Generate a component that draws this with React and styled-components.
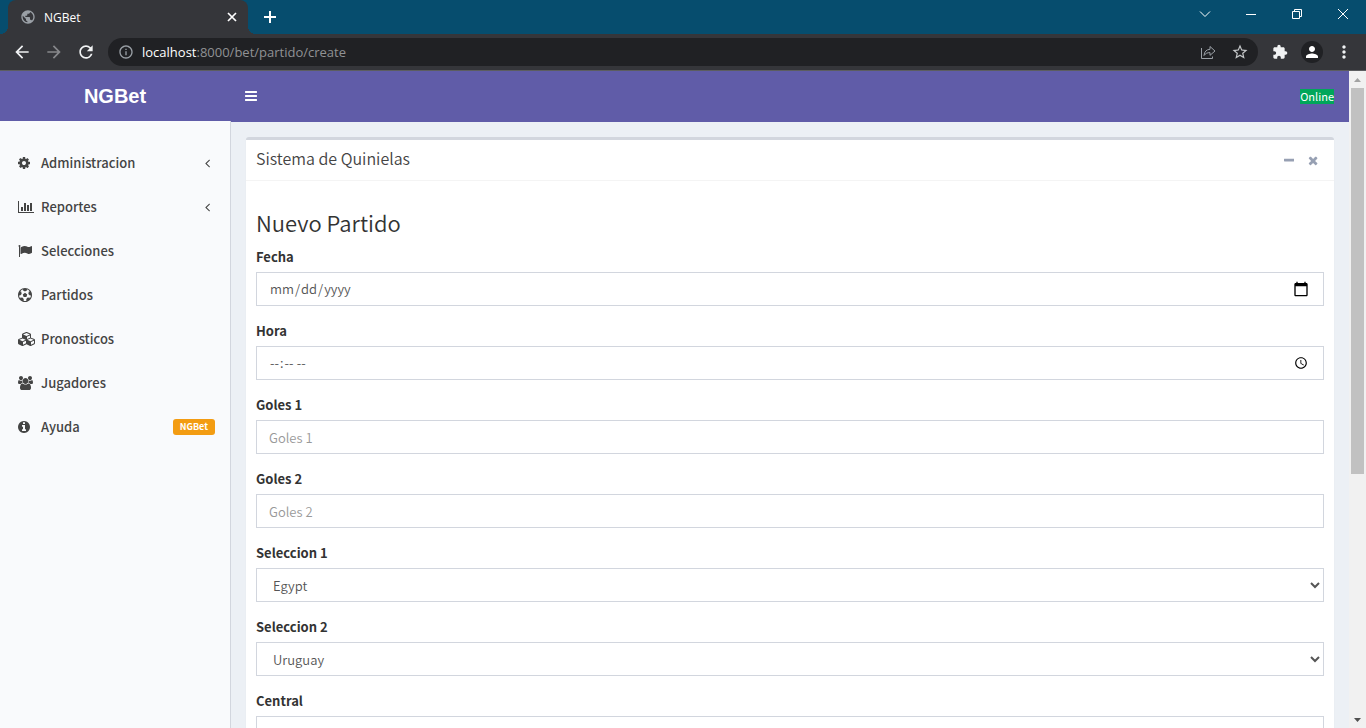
import React from "react";
import styled, { createGlobalStyle, css } from "styled-components";
import {
  MdPublic,
  MdArrowBack,
  MdArrowForward,
  MdRefresh,
  MdInfoOutline,
  MdStarBorder,
  MdExtension,
  MdPerson,
  MdMoreVert,
} from "react-icons/md";

const uiFont = `"Open Sans", "Noto Sans", sans-serif`;
const pageFont = `"Noto Sans CJK SC", "Open Sans", sans-serif`;

const GlobalStyle = createGlobalStyle`
  *, *::before, *::after { box-sizing: border-box; }
  body { margin: 0; overflow: hidden; }
  button, input, select { font-family: inherit; }
  svg { display: block; flex: none; }
`;

/* ---------- browser window ---------- */

const Window = styled.div`
  display: flex;
  flex-direction: column;
  height: 100vh;
  overflow: hidden;
  font-family: ${uiFont};
`;

const PlainButton = styled.button`
  display: flex;
  align-items: center;
  justify-content: center;
  flex: none;
  padding: 0;
  border: 0;
  background: none;
  color: inherit;
  cursor: pointer;
`;

const TabStrip = styled.div`
  display: flex;
  flex: none;
  height: 34px;
  padding-left: 8px;
  background: #064d6e;
  color: #fff;
`;

const Tab = styled.div`
  position: relative;
  display: flex;
  align-items: center;
  gap: 8px;
  width: 240px;
  padding: 0 8px 0 12px;
  border-radius: 8px 8px 0 0;
  background: #35363a;
  font-size: 12px;

  &::before,
  &::after {
    content: "";
    position: absolute;
    bottom: 0;
    width: 8px;
    height: 8px;
  }
  &::before {
    left: -8px;
    background: radial-gradient(circle at 0 0, transparent 8px, #35363a 8px);
  }
  &::after {
    right: -8px;
    background: radial-gradient(circle at 100% 0, transparent 8px, #35363a 8px);
  }
`;

const TabTitle = styled.span`
  flex: 1;
`;

const TabClose = styled(PlainButton)`
  width: 16px;
  height: 16px;
`;

const NewTab = styled(PlainButton)`
  width: 28px;
  margin-left: 8px;
`;

const WindowButtons = styled.div`
  display: flex;
  margin-left: auto;
`;

const WindowButton = styled(PlainButton)`
  width: 46px;
  height: 28px;
`;

const Toolbar = styled.div`
  display: flex;
  align-items: center;
  flex: none;
  height: 37px;
  padding: 0 6px;
  border-bottom: 1px solid #5c5d60;
  background: #35363a;
  color: #f1f3f4;
`;

const ToolButton = styled(PlainButton)`
  width: 32px;
  height: 28px;
  color: ${(p) => (p.$dim ? "#87888b" : "inherit")};
`;

const AddressBar = styled.div`
  display: flex;
  align-items: center;
  flex: 1;
  height: 28px;
  margin: 0 6px;
  padding: 0 2px 0 10px;
  border-radius: 14px;
  background: #202124;
  color: #9aa0a6;
`;

const Url = styled.span`
  flex: 1;
  margin-left: 8px;
  font-size: 13px;
  color: #909294;
`;

const Host = styled.span`
  color: #fff;
`;

const Avatar = styled(PlainButton)`
  width: 22px;
  height: 22px;
  margin: 0 5px;
  border-radius: 50%;
  background: #202124;
  color: #fff;
`;

const Viewport = styled.div`
  display: flex;
  flex: 1;
  min-height: 0;
`;

const ScrollBar = styled.div`
  display: flex;
  flex-direction: column;
  align-items: center;
  flex: none;
  width: 17px;
  background: #f1f1f1;
`;

const ScrollArrow = styled(PlainButton)`
  width: 17px;
  height: 17px;
  color: ${(p) => p.$color};
`;

const ScrollTrack = styled.div`
  flex: 1;
  width: 13px;
`;

const ScrollThumb = styled.div`
  height: 62%;
  background: #c1c1c1;
`;

/* ---------- page ---------- */

const Page = styled.div`
  display: flex;
  flex-direction: column;
  flex: 1;
  min-width: 0;
  overflow: hidden;
  background: #ecf0f5;
  color: #333;
  font-family: ${pageFont};
  font-size: 13px;
  line-height: 20px;
`;

const Header = styled.header`
  display: flex;
  align-items: center;
  flex: none;
  height: 50px;
  background: #605ca8;
  color: #fff;
`;

const Brand = styled.a`
  width: 230px;
  text-align: center;
  text-decoration: none;
  color: #fff;
  font: bold 20px/50px "Liberation Sans", sans-serif;
`;

const MenuToggle = styled(PlainButton)`
  width: 42px;
  height: 50px;
`;

const Online = styled.a`
  margin: 0 15px 0 auto;
  background: #00a65a;
  color: #fff;
  font-size: 11px;
  font-weight: 400;
  line-height: 15px;
  text-decoration: none;
`;

const Body = styled.div`
  display: flex;
  flex: 1;
  min-height: 0;
`;

const Sidebar = styled.nav`
  flex: none;
  width: 231px;
  padding-top: 20px;
  border-right: 1px solid #d2d6de;
  background: #f9fafc;
`;

const MenuLink = styled.a`
  display: flex;
  align-items: center;
  height: 44px;
  padding: 0 15px 0 18px;
  color: #444;
  font-weight: 500;
  text-decoration: none;
`;

const MenuIcon = styled.span`
  display: flex;
  width: 23px;
`;

const MenuLabel = styled.span`
  flex: 1;
`;

const Badge = styled.span`
  padding: 0 7px;
  border-radius: 3px;
  background: #f39c12;
  color: #fff;
  font-size: 9px;
  font-weight: bold;
  line-height: 16px;
`;

const ArrowSlot = styled.span`
  display: flex;
  justify-content: center;
  width: 15px;
`;

const Content = styled.main`
  flex: 1;
  min-width: 0;
  padding: 15px;
  border-top: 1px solid #605ca8;
`;

const Box = styled.section`
  border-top: 3px solid #d2d6de;
  border-radius: 3px;
  background: #fff;
  box-shadow: 0 1px 1px rgba(0, 0, 0, 0.1);
`;

const BoxHeader = styled.div`
  display: flex;
  align-items: center;
  height: 41px;
  padding: 0 9px 0 10px;
  border-bottom: 1px solid #f4f4f4;
`;

const BoxTitle = styled.h3`
  flex: 1;
  margin: 0;
  padding-bottom: 4px;
  color: #444;
  font-size: 16px;
  font-weight: 350;
  line-height: 20px;
`;

const BoxTool = styled(PlainButton)`
  width: 24px;
  height: 24px;
  color: #97a0b3;
`;

const Form = styled.form`
  padding: 28px 10px 10px;
`;

const FormTitle = styled.h3`
  margin: 0 0 12px;
  font-size: 22px;
  font-weight: 350;
  line-height: 26px;
`;

const Field = styled.div`
  margin-bottom: 15px;
`;

const Label = styled.label`
  display: block;
  margin-bottom: 5px;
  font-weight: bold;
  line-height: 20px;
`;

const control = css`
  display: block;
  width: 100%;
  height: 34px;
  padding: 6px 12px;
  border: 1px solid #d2d6de;
  border-radius: 0;
  background: #fff;
  color: #555;
  font-size: 13px;
  font-weight: 350;
  line-height: 20px;
`;

const Input = styled.input`
  ${control}
  &::placeholder {
    color: #999;
    opacity: 1;
  }
  &[type="date"]::-webkit-calendar-picker-indicator {
    width: 20px;
    height: 16px;
    padding: 0;
    background-position: center;
    background-repeat: no-repeat;
    background-size: 16px 16px;
  }
`;

const Select = styled.select`
  ${control}
`;

/* ---------- icons ---------- */

const glyphs = {
  cog: [1536, 128, "M1152 896q0-106-75-181t-181-75-181 75-75 181 75 181 181 75 181-75 75-181zm512-109v222q0 12-8 23t-20 13l-185 28q-19 54-39 91 35 50 107 138 10 12 10 25t-9 23q-27 37-99 108t-94 71q-12 0-26-9l-138-108q-44 23-91 38-16 136-29 186-7 28-36 28h-222q-14 0-24.5-8.5t-11.5-21.5l-28-184q-49-16-90-37l-141 107q-10 9-25 9-14 0-25-11-126-114-165-168-7-10-7-23 0-12 8-23 15-21 51-66.5t54-70.5q-27-50-41-99l-183-27q-13-2-21-12.5t-8-23.5v-222q0-12 8-23t19-13l186-28q14-46 39-92-40-57-107-138-10-12-10-24 0-10 9-23 26-36 98.5-107.5t94.5-71.5q13 0 26 10l138 107q44-23 91-38 16-136 29-186 7-28 36-28h222q14 0 24.5 8.5t11.5 21.5l28 184q49 16 90 37l142-107q9-9 24-9 13 0 25 10 129 119 165 170 7 8 7 22 0 12-8 23-15 21-51 66.5t-54 70.5q26 50 41 98l183 28q13 2 21 12.5t8 23.5z"],
  chart: [2048, 0, "M640 896v512H384V896h256zm384-512v1024H768V384h256zm1024 1152v128H0V128h128v1408h1920zm-640-896v768h-256V640h256zm384-256v1024h-256V384h256z"],
  flag: [1792, 0, "M320 256q0 72-64 110v1266q0 13-9.5 22.5t-22.5 9.5h-64q-13 0-22.5-9.5t-9.5-22.5v-1266q-64-38-64-110 0-53 37.5-90.5t90.5-37.5 90.5 37.5 37.5 90.5zm1472 64v763q0 25-12.5 38.5t-39.5 27.5q-215 116-369 116-61 0-123.5-22t-108.5-48-115.5-48-142.5-22q-192 0-464 146-17 9-33 9-26 0-45-19t-19-45v-742q0-32 31-55 21-14 79-43 236-120 421-120 107 0 200 29t219 88q38 19 88 19 54 0 117.5-21t110-47 88-47 54.5-21q26 0 45 19t19 45z"],
  ball: [1792, 0, "M609 816l287-208 287 208-109 336h-355zm287-816q182 0 348 71t286 191 191 286 71 348-71 348-191 286-286 191-348 71-348-71-286-191-191-286-71-348 71-348 191-286 286-191 348-71zm619 1350q149-203 149-454v-3l-102 89-240-224 63-323 134 12q-150-206-389-282l53 124-287 159-287-159 53-124q-239 76-389 282l135-12 62 323-240 224-102-89v3q0 251 149 454l30-132 326 40 139 298-116 69q117 39 240 39t240-39l-116-69 139-298 326-40z"],
  cubes: [2304, 0, "M640 1632l384-192v-314l-384 164v342zm-64-454l404-173-404-173-404 173zm1088 454l384-192v-314l-384 164v342zm-64-454l404-173-404-173-404 173zm-448-293l384-165v-266l-384 164v267zm-64-379l441-189-441-189-441 189zm1088 518v416q0 36-19 67t-52 47l-448 224q-25 14-57 14t-57-14l-448-224q-4-2-7-4-2 2-7 4l-448 224q-25 14-57 14t-57-14l-448-224q-33-16-52-47t-19-67v-416q0-38 21.5-70t56.5-48l434-186v-400q0-38 21.5-70t56.5-48l448-192q23-10 50-10t50 10l448 192q35 16 56.5 48t21.5 70v400l434 186q36 16 57 48t21 70z"],
  users: [1920, 64, "M657 896q-162 5-265 128h-134q-82 0-138-40.5t-56-118.5q0-353 124-353 6 0 43.5 21t97.5 42.5 119 21.5q67 0 133-23-5 37-5 66 0 139 81 256zm1071 637q0 120-73 189.5t-194 69.5h-874q-121 0-194-69.5t-73-189.5q0-53 3.5-103.5t14-109 26.5-108.5 43-97.5 62-81 85.5-53.5 111.5-20q10 0 43 21.5t73 48 107 48 135 21.5 135-21.5 107-48 73-48 43-21.5q61 0 111.5 20t85.5 53.5 62 81 43 97.5 26.5 108.5 14 109 3.5 103.5zm-1024-1277q0 106-75 181t-181 75-181-75-75-181 75-181 181-75 181 75 75 181zm704 384q0 159-112.5 271.5t-271.5 112.5-271.5-112.5-112.5-271.5 112.5-271.5 271.5-112.5 271.5 112.5 112.5 271.5zm576 225q0 78-56 118.5t-138 40.5h-134q-103-123-265-128 81-117 81-256 0-29-5-66 66 23 133 23 59 0 119-21.5t97.5-42.5 43.5-21q124 0 124 353zm-128-609q0 106-75 181t-181 75-181-75-75-181 75-181 181-75 181 75 75 181z"],
  info: [1536, 128, "M1152 1376v-160q0-14-9-23t-23-9h-96v-512q0-14-9-23t-23-9h-320q-14 0-23 9t-9 23v160q0 14 9 23t23 9h96v320h-96q-14 0-23 9t-9 23v160q0 14 9 23t23 9h448q14 0 23-9t9-23zm-128-896v-160q0-14-9-23t-23-9h-192q-14 0-23 9t-9 23v160q0 14 9 23t23 9h192q14 0 23-9t9-23zm640 416q0 209-103 385.5t-279.5 279.5-385.5 103-385.5-103-279.5-279.5-103-385.5 103-385.5 279.5-279.5 385.5-103 385.5 103 279.5 279.5 103 385.5z"],
  bars: [1536, 128, "M1664 1344v128q0 26-19 45t-45 19h-1408q-26 0-45-19t-19-45v-128q0-26 19-45t45-19h1408q26 0 45 19t19 45zm0-512v128q0 26-19 45t-45 19h-1408q-26 0-45-19t-19-45v-128q0-26 19-45t45-19h1408q26 0 45 19t19 45zm0-512v128q0 26-19 45t-45 19h-1408q-26 0-45-19t-19-45v-128q0-26 19-45t45-19h1408q26 0 45 19t19 45z"],
  angle: [640, 576, "M1203 544q0 13-10 23l-393 393 393 393q10 10 10 23t-10 23l-50 50q-10 10-23 10t-23-10l-466-466q-10-10-10-23t10-23l466-466q10-10 23-10t23 10l50 50q10 10 10 23z"],
  minus: [1408, 192, "M1600 736v192q0 40-28 68t-68 28h-1216q-40 0-68-28t-28-68v-192q0-40 28-68t68-28h1216q40 0 68 28t28 68z"],
  times: [1408, 192, "M1490 1322q0 40-28 68l-136 136q-28 28-68 28t-68-28l-294-294-294 294q-28 28-68 28t-68-28l-136-136q-28-28-28-68t28-68l294-294-294-294q-28-28-28-68t28-68l136-136q28-28 68-28t68 28l294 294 294-294q28-28 68-28t68 28l136 136q28 28 28 68t-28 68l-294 294 294 294q28 28 28 68z"],
};

function Glyph({ name, size = 14 }) {
  const [width, left, d] = glyphs[name];
  return (
    <svg width={(width / 1792) * size} height={size} viewBox={`${left} 0 ${width} 1792`} fill="currentColor" aria-hidden="true">
      <path d={d} />
    </svg>
  );
}

function LineIcon({ size = 12, width = 1, children }) {
  return (
    <svg width={size} height={size} viewBox={`0 0 ${size} ${size}`} fill="none" stroke="currentColor" strokeWidth={width} aria-hidden="true">
      {children}
    </svg>
  );
}

function Triangle({ down }) {
  return (
    <svg width="7" height="4" viewBox="0 0 7 4" fill="currentColor" aria-hidden="true">
      <path d={down ? "M0 0h7L3.5 4z" : "M0 4h7L3.5 0z"} />
    </svg>
  );
}

const menu = [
  { icon: "cog", label: "Administracion", expandable: true },
  { icon: "chart", label: "Reportes", expandable: true },
  { icon: "flag", label: "Selecciones" },
  { icon: "ball", label: "Partidos" },
  { icon: "cubes", label: "Pronosticos" },
  { icon: "users", label: "Jugadores" },
  { icon: "info", label: "Ayuda", badge: "NGBet" },
];

const fields = [
  { id: "fecha", label: "Fecha", type: "date" },
  { id: "hora", label: "Hora", type: "time" },
  { id: "goles1", label: "Goles 1", type: "text", placeholder: "Goles 1" },
  { id: "goles2", label: "Goles 2", type: "text", placeholder: "Goles 2" },
  { id: "seleccion1", label: "Seleccion 1", options: ["Egypt", "Uruguay"], value: "Egypt" },
  { id: "seleccion2", label: "Seleccion 2", options: ["Egypt", "Uruguay"], value: "Uruguay" },
  { id: "central", label: "Central", type: "text" },
];

function BrowserChrome() {
  return (
    <>
      <TabStrip>
        <Tab>
          <MdPublic size={16} color="#9aa0a6" />
          <TabTitle>NGBet</TabTitle>
          <TabClose aria-label="Close tab">
            <LineIcon size={10} width={1.7}>
              <path d="M1 1l8 8M9 1l-8 8" />
            </LineIcon>
          </TabClose>
        </Tab>
        <NewTab aria-label="New tab">
          <LineIcon size={12} width={2}>
            <path d="M6 0v12M0 6h12" />
          </LineIcon>
        </NewTab>
        <WindowButtons>
          <WindowButton aria-label="Search tabs">
            <LineIcon size={12}>
              <path d="M1 3.500l5 5 5-5" />
            </LineIcon>
          </WindowButton>
          <WindowButton aria-label="Minimize">
            <LineIcon size={10}>
              <path d="M0 5.500h10" />
            </LineIcon>
          </WindowButton>
          <WindowButton aria-label="Restore">
            <LineIcon size={10}>
              <path d="M.5 2.500h7v7h-7zM2.500 2.500v-2h7v7h-2" />
            </LineIcon>
          </WindowButton>
          <WindowButton aria-label="Close">
            <LineIcon size={10}>
              <path d="M0 0l10 10M10 0L0 10" />
            </LineIcon>
          </WindowButton>
        </WindowButtons>
      </TabStrip>
      <Toolbar>
        <ToolButton aria-label="Back">
          <MdArrowBack size={20} />
        </ToolButton>
        <ToolButton aria-label="Forward" $dim>
          <MdArrowForward size={20} />
        </ToolButton>
        <ToolButton aria-label="Reload">
          <MdRefresh size={20} />
        </ToolButton>
        <AddressBar>
          <MdInfoOutline size={16} />
          <Url>
            <Host>localhost</Host>:8000/bet/partido/create
          </Url>
          <ToolButton aria-label="Share">
            <LineIcon size={16}>
              <path d="M1.500 4v10.500h11v-2" />
              <path d="M4 11.500c.3-4 2.600-6 6-6.200V2.500l5 4.500-5 4.300V8.600c-2.600 0-4.500.8-6 2.900z" />
            </LineIcon>
          </ToolButton>
          <ToolButton aria-label="Bookmark">
            <MdStarBorder size={18} color="#c4c7c9" />
          </ToolButton>
        </AddressBar>
        <ToolButton aria-label="Extensions">
          <MdExtension size={16} />
        </ToolButton>
        <Avatar aria-label="Profile">
          <MdPerson size={18} />
        </Avatar>
        <ToolButton aria-label="More">
          <MdMoreVert size={20} />
        </ToolButton>
      </Toolbar>
    </>
  );
}

function PartidoForm() {
  return (
    <Form>
      <FormTitle>Nuevo Partido</FormTitle>
      {fields.map(({ id, label, options, value, ...rest }) => (
        <Field key={id}>
          <Label htmlFor={id}>{label}</Label>
          {options ? (
            <Select id={id} defaultValue={value}>
              {options.map((o) => (
                <option key={o}>{o}</option>
              ))}
            </Select>
          ) : (
            <Input id={id} {...rest} />
          )}
        </Field>
      ))}
    </Form>
  );
}

export default function App() {
  return (
    <Window>
      <GlobalStyle />
      <BrowserChrome />
      <Viewport>
        <Page>
          <Header>
            <Brand href="#">NGBet</Brand>
            <MenuToggle aria-label="Toggle navigation">
              <Glyph name="bars" />
            </MenuToggle>
            <Online href="#">Online</Online>
          </Header>
          <Body>
            <Sidebar>
              {menu.map((m) => (
                <MenuLink key={m.label} href="#">
                  <MenuIcon>
                    <Glyph name={m.icon} />
                  </MenuIcon>
                  <MenuLabel>{m.label}</MenuLabel>
                  {m.expandable && (
                    <ArrowSlot>
                      <Glyph name="angle" />
                    </ArrowSlot>
                  )}
                  {m.badge && <Badge>{m.badge}</Badge>}
                </MenuLink>
              ))}
            </Sidebar>
            <Content>
              <Box>
                <BoxHeader>
                  <BoxTitle>Sistema de Quinielas</BoxTitle>
                  <BoxTool aria-label="Collapse">
                    <Glyph name="minus" size={13} />
                  </BoxTool>
                  <BoxTool aria-label="Remove">
                    <Glyph name="times" size={13} />
                  </BoxTool>
                </BoxHeader>
                <PartidoForm />
              </Box>
            </Content>
          </Body>
        </Page>
        <ScrollBar>
          <ScrollArrow aria-label="Scroll up" $color="#a3a3a3">
            <Triangle />
          </ScrollArrow>
          <ScrollTrack>
            <ScrollThumb />
          </ScrollTrack>
          <ScrollArrow aria-label="Scroll down" $color="#505050">
            <Triangle down />
          </ScrollArrow>
        </ScrollBar>
      </Viewport>
    </Window>
  );
}
